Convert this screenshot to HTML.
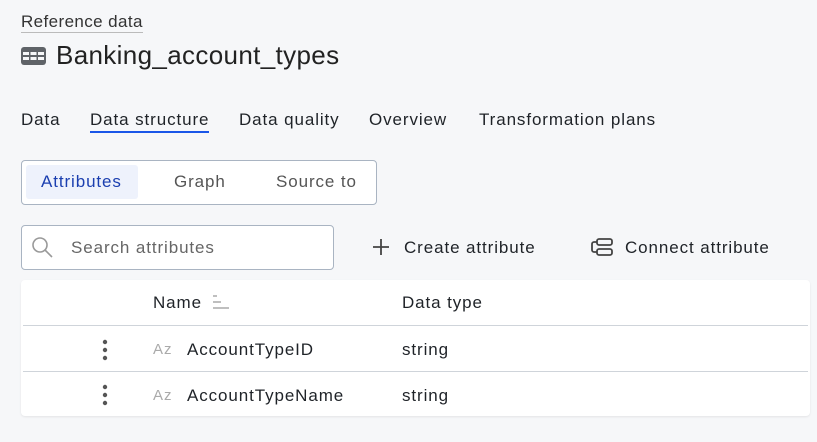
<!DOCTYPE html>
<html><head><style>
body{margin:0;width:817px;height:442px;background:#f6f7f9;font-family:"Liberation Sans",sans-serif;color:#1f2328;position:relative;overflow:hidden}
.a{position:absolute;white-space:nowrap}
.t{font-size:17px;line-height:22px;letter-spacing:0.9px}
.r{font-size:17px;line-height:20px;letter-spacing:0.9px}
.az{font-size:15px;line-height:18px;color:#aaa;letter-spacing:1px}
</style></head><body>
<div class="a" style="left:21px;top:12px;font-size:17px;color:#333;border-bottom:1px solid #bbb;line-height:20px;letter-spacing:0.4px">Reference data</div>
<svg class="a" style="left:21px;top:47px" width="25" height="18" viewBox="0 0 25 18"><rect x="0" y="0" width="25" height="18" rx="3" fill="#5f6368"/><g fill="#f6f7f9"><rect x="2" y="5" width="6" height="3"/><rect x="9.5" y="5" width="6" height="3"/><rect x="17" y="5" width="6" height="3"/><rect x="2" y="10" width="6" height="3"/><rect x="9.5" y="10" width="6" height="3"/><rect x="17" y="10" width="6" height="3"/></g></svg>
<div class="a" style="left:56px;top:40px;font-size:26px;line-height:30px;color:#222;letter-spacing:0.35px">Banking_account_types</div>
<div class="a t" style="left:21px;top:109px">Data</div>
<div class="a t" style="left:90px;top:109px">Data structure</div>
<div class="a" style="left:90px;top:131px;width:119px;height:2px;background:#1a56e8"></div>
<div class="a t" style="left:239px;top:109px">Data quality</div>
<div class="a t" style="left:369px;top:109px">Overview</div>
<div class="a t" style="left:479px;top:109px">Transformation plans</div>
<div class="a" style="left:21px;top:160px;width:354px;height:43px;border:1px solid #a9b4c2;border-radius:4px;background:#fff"></div>
<div class="a" style="left:26px;top:165px;width:112px;height:34px;background:#eef2fc;border-radius:3px"></div>
<div class="a r" style="left:41px;top:172px;color:#1b3fb0">Attributes</div>
<div class="a r" style="left:174px;top:172px;color:#555">Graph</div>
<div class="a r" style="left:276px;top:172px;color:#555">Source to</div>
<div class="a" style="left:21px;top:225px;width:311px;height:43px;border:1px solid #a9b4c2;border-radius:4px;background:#fff"></div>
<svg class="a" style="left:31px;top:236px" width="24" height="24" viewBox="0 0 24 24" fill="none" stroke="#999" stroke-width="1.6"><circle cx="9" cy="9" r="7"/><path d="M14 14l7 7"/></svg>
<div class="a r" style="left:71px;top:238px;color:#666">Search attributes</div>
<svg class="a" style="left:372px;top:238px" width="18" height="18" viewBox="0 0 18 18" stroke="#444" stroke-width="1.8"><path d="M9 1v16M1 9h16"/></svg>
<div class="a r" style="left:404px;top:238px">Create attribute</div>
<svg class="a" style="left:590px;top:237px" width="24" height="20" viewBox="0 0 24 20" fill="none" stroke="#444" stroke-width="1.8"><rect x="7" y="2" width="15" height="6" rx="2"/><rect x="7" y="12" width="15" height="6" rx="2"/><path d="M7 5H4a2 2 0 0 0-2 2v6a2 2 0 0 0 2 2h3"/></svg>
<div class="a r" style="left:625px;top:238px">Connect attribute</div>
<div class="a" style="left:21px;top:280px;width:789px;height:136px;background:#fff;border-radius:4px;box-shadow:0 1px 2px rgba(0,0,0,.08)"></div>
<div class="a r" style="left:153px;top:293px">Name</div>
<svg class="a" style="left:211px;top:293px" width="20" height="18" viewBox="0 0 20 18" stroke="#aaa" stroke-width="1.6"><path d="M2 3h4M2 9h8M2 15h16"/></svg>
<div class="a r" style="left:402px;top:293px">Data type</div>
<div class="a" style="left:23px;top:325px;width:785px;height:1px;background:#cfd4da"></div>
<div class="a" style="left:23px;top:371px;width:785px;height:1px;background:#cfd4da"></div>
<svg class="a" style="left:101px;top:339px" width="8" height="22" viewBox="0 0 8 22" fill="#555"><circle cx="4" cy="3" r="2.2"/><circle cx="4" cy="11" r="2.2"/><circle cx="4" cy="19" r="2.2"/></svg>
<svg class="a" style="left:101px;top:384px" width="8" height="22" viewBox="0 0 8 22" fill="#555"><circle cx="4" cy="3" r="2.2"/><circle cx="4" cy="11" r="2.2"/><circle cx="4" cy="19" r="2.2"/></svg>
<div class="a az" style="left:153px;top:341px">Az</div>
<div class="a r" style="left:187px;top:340px">AccountTypeID</div>
<div class="a r" style="left:402px;top:340px">string</div>
<div class="a az" style="left:153px;top:387px">Az</div>
<div class="a r" style="left:187px;top:386px">AccountTypeName</div>
<div class="a r" style="left:402px;top:386px">string</div>
</body></html>
